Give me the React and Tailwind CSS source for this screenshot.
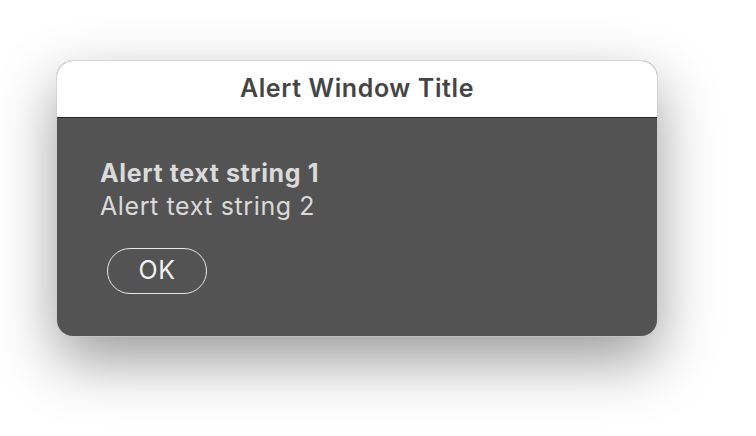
export default function App() {
  return (
    <div
      className="w-[756px] h-[436px] bg-white overflow-hidden pt-[61px] pl-[57px]"
      style={{ fontFamily: 'Inter, "Noto Sans", sans-serif' }}
    >
      <div className="w-[600px] h-[275px] rounded-[16px] overflow-hidden bg-[#535353] shadow-[0_24px_60px_rgba(0,0,0,0.4)] ring-1 ring-[#c9c9c9]/60">
        {/* Title bar */}
        <div className="h-[57px] bg-white border-b border-[#262626] flex items-center justify-center">
          <span className="text-[25px] font-semibold text-[#454545] tracking-[0.6px]">Alert Window Title</span>
        </div>

        {/* Body */}
        <div className="pt-[38px] pl-[43px] text-[#dadada]">
          <div className="text-[25px] leading-[35px] font-bold tracking-[0.6px]">Alert text string 1</div>
          <div className="text-[25px] leading-[30px] tracking-[0.6px]">Alert text string 2</div>
          <button className="mt-[27px] ml-[7px] w-[100px] h-[46px] rounded-full border-[1.5px] border-[#e6e6e6] text-[25px] text-[#f2f2f2] tracking-[0.5px] flex items-center justify-center">
            OK
          </button>
        </div>
      </div>
    </div>
  );
}
